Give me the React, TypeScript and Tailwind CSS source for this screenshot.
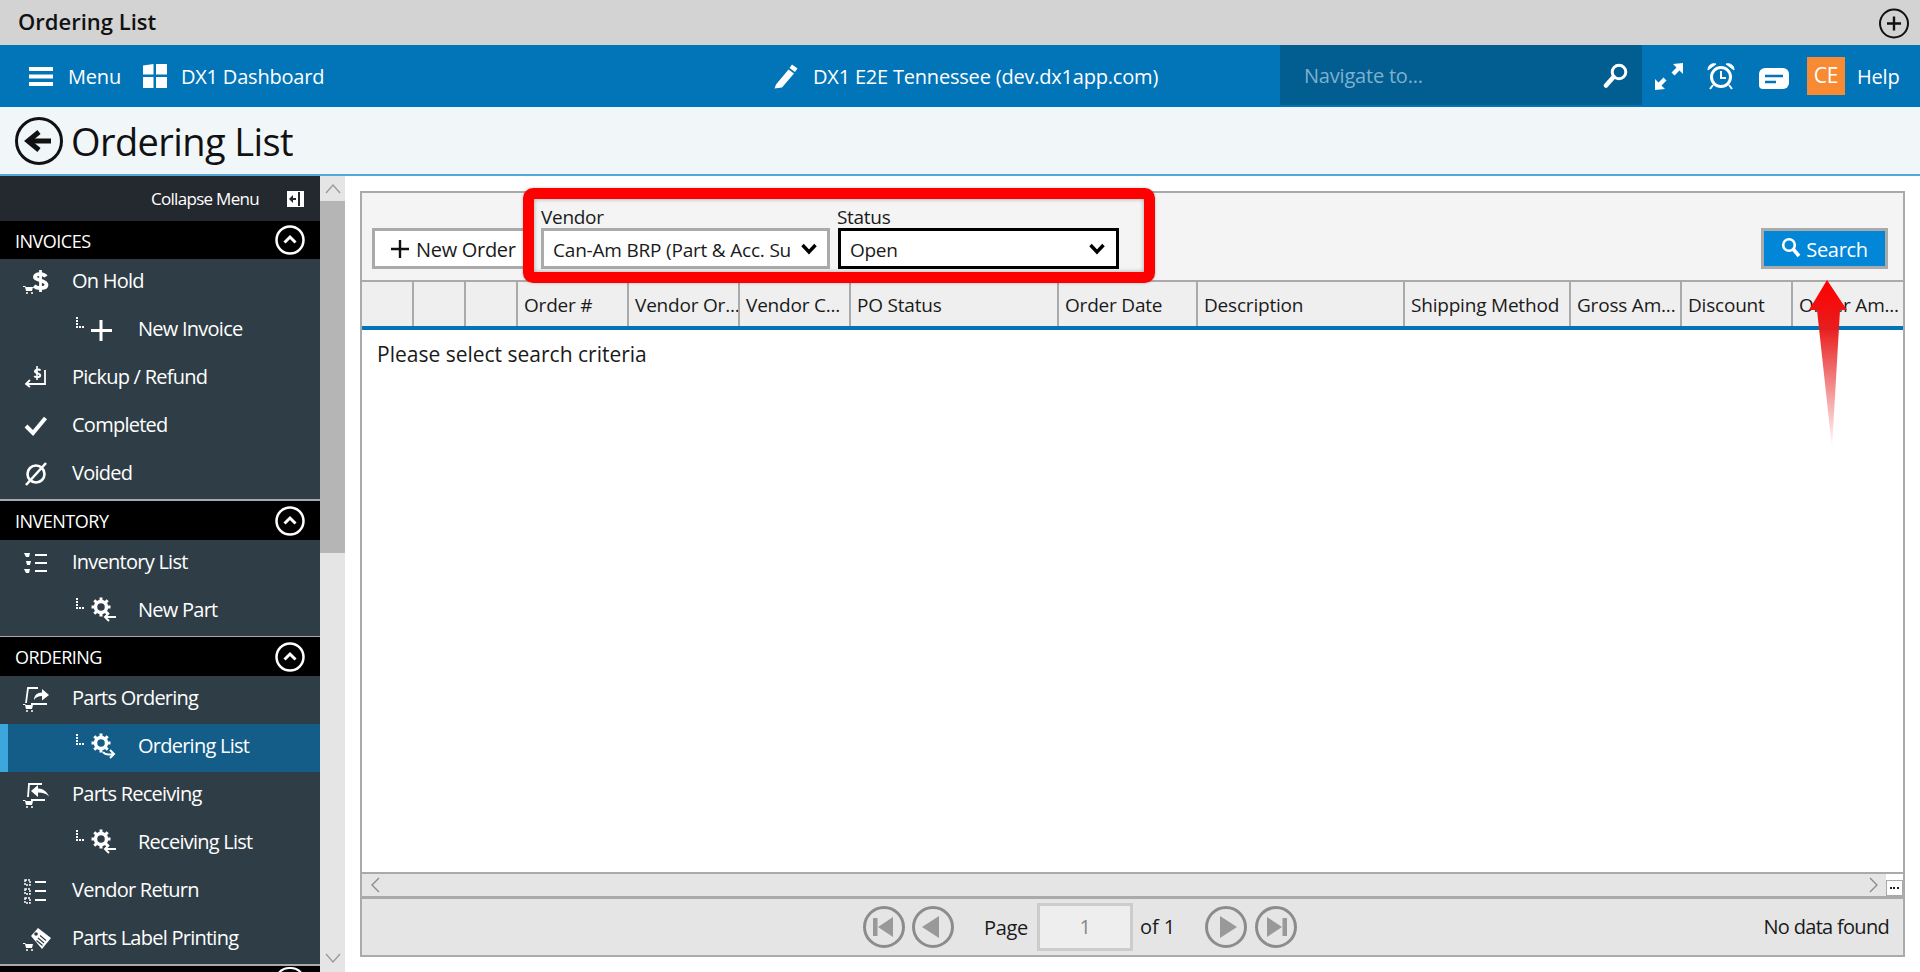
import type { ReactNode } from "react";

const cart = (x: number, y: number) => (
  <g fill="currentColor" stroke="none">
    <path d={`M${x} ${y}h2l1 1h7l-1 4h-6l-1-4h-2z`} />
    <circle cx={x + 4} cy={y + 7} r="1" />
    <circle cx={x + 9} cy={y + 7} r="1" />
  </g>
);

function Ico({ children, w = 28, h = 28 }: { children: ReactNode; w?: number; h?: number }) {
  return (
    <svg width={w} height={h} viewBox={`0 0 ${w} ${h}`} fill="none" stroke="currentColor" className="-mt-[2px] shrink-0 text-white">
      {children}
    </svg>
  );
}

const OnHoldIcon = (
  <Ico>
    <path d="M23 8.500C21 5.500 13 5 12 8.500c-1 4 12 3.500 11.500 8.500-.4 3.800-9 4-12.500 1" strokeWidth="3.800" />
    <path d="M17.500 2v22" strokeWidth="2.800" />
    {cart(0, 18)}
  </Ico>
);
const PickupIcon = (
  <Ico>
    <path d="M17.500 6.500c-1-1.300-5-1.400-5.500.6-.5 2.300 5.600 1.900 5.200 4.500-.3 2-4.600 1.900-6 .5" strokeWidth="2" />
    <path d="M14 2v14" strokeWidth="1.600" />
    <path d="M22 6v14H3M7 16l-4 4 4 3" strokeWidth="1.800" />
  </Ico>
);
const CheckIcon = (
  <Ico>
    <path d="M3 14l7 7L22.500 6" strokeWidth="4" />
  </Ico>
);
const VoidIcon = (
  <Ico>
    <circle cx="13" cy="14" r="8.500" strokeWidth="2.600" />
    <path d="M3 25L23 3" strokeWidth="2.600" />
  </Ico>
);
const ListIcon = (
  <Ico>
    <path d="M12 6h12M12 14h12M12 22h12" strokeWidth="2" />
    <path d="M1 4h6l-1 4H3zM3 12h5l-1 4H4zM1 20h6l-1 4H3z" fill="currentColor" stroke="none" />
  </Ico>
);
const ReturnListIcon = (
  <Ico>
    <path d="M12 5h11M12 14h11M12 23h11" strokeWidth="2" />
    <path d="M2 3h5v5H2zM2 12h5v5H2zM2 21h5v5H2z" strokeWidth="1.500" strokeDasharray="2 1" />
  </Ico>
);
const OrderIcon = (
  <Ico>
    <path d="M15 3H5L3 18M8 19h16" strokeWidth="1.800" />
    <path d="M26 10l-7-6v3.500c-5 0-8 3-8 7.500 2-3 4.500-4 8-4v4.500z" fill="currentColor" stroke="none" />
    {cart(0, 19)}
  </Ico>
);
const ReceiveIcon = (
  <Ico>
    <path d="M5 16L6 3h13M8 19h14" strokeWidth="1.800" />
    <path d="M8 10l7-6v3.500c5 0 9 3 11 8-3-3-6-4-11-4V16z" fill="currentColor" stroke="none" />
    {cart(0, 19)}
  </Ico>
);
const LabelIcon = (
  <Ico>
    <path d="M8 11l7-8 13 10-9 11z" fill="currentColor" stroke="none" />
    <circle cx="13" cy="9" r="1.800" fill="#2f3e46" stroke="none" />
    <path d="M15 13l6 5M13.500 15.500l6 5M17 10.500l6 5" stroke="#2f3e46" strokeWidth="1.200" />
    {cart(0, 18)}
  </Ico>
);

function Tree() {
  return (
    <svg width="14" height="14" viewBox="0 0 14 14" fill="none" stroke="currentColor" className="-mt-[16px] shrink-0 text-white">
      <path d="M2 1v10h8" strokeWidth="2" strokeDasharray="2 1" />
    </svg>
  );
}

function Gear({ variant }: { variant: "back" | "loop" }) {
  return (
    <svg width="28" height="28" viewBox="0 0 28 28" fill="none" stroke="currentColor" className="-mt-[4px] shrink-0 text-white">
      <circle cx="11" cy="11" r="5.500" strokeWidth="3.500" />
      <path d="M11 1.500v3M11 17.500v3M1.500 11h3M17.500 11h3M4.300 4.300l2.200 2.200M15.500 15.500l2.200 2.200M17.700 4.300l-2.200 2.200M6.500 15.500l-2.200 2.200" strokeWidth="3" />
      {variant === "back" ? (
        <path d="M26 21H15M19 17l-4 4 4 4" strokeWidth="2" />
      ) : (
        <path d="M13 20c2 3 6 3 10 2M20 18l4 4-4 4" strokeWidth="2" />
      )}
    </svg>
  );
}

function PlusBold() {
  return (
    <svg width="24" height="24" viewBox="0 0 24 24" stroke="currentColor" className="-ml-[1px] -mt-[2px] shrink-0 text-white">
      <path d="M12 2v21M2 12.500h21" strokeWidth="3" />
    </svg>
  );
}

function Row({ icon, label }: { icon: ReactNode; label: string }) {
  return (
    <div className="flex h-12 shrink-0 items-center pl-[23px]">
      <div className="flex w-[49px] items-center">{icon}</div>
      <span className="-mt-[4px]">{label}</span>
    </div>
  );
}

function SubRow({ icon, label, active }: { icon: ReactNode; label: string; active?: boolean }) {
  return (
    <div className={active ? "flex h-12 shrink-0 items-center border-l-8 border-[#3ba7dc] bg-[#135d88] pl-[67px]" : "flex h-12 shrink-0 items-center pl-[75px]"}>
      <Tree />
      <div className="ml-[1px] flex w-[48px] items-center">{icon}</div>
      <span className="-mt-[4px]">{label}</span>
    </div>
  );
}

function Section({ title, first }: { title: string; first?: boolean }) {
  return (
    <div className={first ? "flex h-[38px] shrink-0 items-center justify-between bg-black pl-[15px] pr-[15px] text-[18px] tracking-[-0.5px]" : "flex h-[39px] shrink-0 items-center justify-between bg-black pl-[15px] pr-[15px] text-[18px] tracking-[-0.5px]"}>
      <span className="mt-[2px]">{title}</span>
      <svg width="30" height="30" viewBox="0 0 30 30" fill="none" stroke="white" className="shrink-0">
        <circle cx="15" cy="15" r="13.500" strokeWidth="2.500" />
        <path d="M9.500 17.500L15 12l5.500 5.500" strokeWidth="3" />
      </svg>
    </div>
  );
}

function Sidebar() {
  return (
    <aside className="flex w-[320px] shrink-0 flex-col overflow-hidden bg-[#2f3e46] text-[20px] tracking-[-0.75px] text-white">
      <div className="flex h-[45px] shrink-0 items-center justify-end bg-[#24292f] pr-[16px] text-[17px] tracking-[-0.7px]">
        <span className="mr-[28px]">Collapse Menu</span>
        <svg width="17" height="16" viewBox="0 0 17 16" className="shrink-0">
          <rect width="17" height="16" fill="white" />
          <rect x="11" y="1" width="2" height="14" fill="#24292f" />
          <path d="M2 8l4-4v3h3v2H6v3z" fill="#24292f" />
        </svg>
      </div>
      <Section title="INVOICES" first />
      <Row icon={OnHoldIcon} label="On Hold" />
      <SubRow icon={<PlusBold />} label="New Invoice" />
      <Row icon={PickupIcon} label="Pickup / Refund" />
      <Row icon={CheckIcon} label="Completed" />
      <Row icon={VoidIcon} label="Voided" />
      <div className="h-[2px] shrink-0 bg-[#a9a9a9]" />
      <Section title="INVENTORY" />
      <Row icon={ListIcon} label="Inventory List" />
      <SubRow icon={<Gear variant="back" />} label="New Part" />
      <div className="h-[1px] shrink-0 bg-[#a9a9a9]" />
      <Section title="ORDERING" />
      <Row icon={OrderIcon} label="Parts Ordering" />
      <SubRow icon={<Gear variant="loop" />} label="Ordering List" active />
      <Row icon={ReceiveIcon} label="Parts Receiving" />
      <SubRow icon={<Gear variant="back" />} label="Receiving List" />
      <Row icon={ReturnListIcon} label="Vendor Return" />
      <Row icon={LabelIcon} label="Parts Label Printing" />
      <div className="h-[2px] shrink-0 bg-[#a9a9a9]" />
      <div className="flex flex-1 justify-end bg-black pr-[15px] pt-[1px]">
        <div className="h-[14px] w-[30px] rounded-t-full border-[2.5px] border-b-0 border-white" />
      </div>
    </aside>
  );
}

function ScrollRail() {
  return (
    <div className="flex w-[25px] shrink-0 flex-col bg-[#e5e5e5]">
      <div className="flex h-[25px] shrink-0 items-center justify-center">
        <svg width="16" height="10" viewBox="0 0 16 10" fill="none" stroke="#9a9a9a" strokeWidth="1.300">
          <path d="M1 9l7-8 7 8" />
        </svg>
      </div>
      <div className="h-[352px] shrink-0 bg-[#b5b5b5]" />
      <div className="flex flex-1 items-end justify-center pb-[9px]">
        <svg width="16" height="10" viewBox="0 0 16 10" fill="none" stroke="#9a9a9a" strokeWidth="1.300">
          <path d="M1 1l7 8 7-8" />
        </svg>
      </div>
    </div>
  );
}

const columns = ["", "", "", "Order #", "Vendor Or...", "Vendor C...", "PO Status", "Order Date", "Description", "Shipping Method", "Gross Am...", "Discount", "Order Am..."];

function Chevron() {
  return (
    <svg width="16" height="12" viewBox="0 0 16 12" fill="none" stroke="black" strokeWidth="3.400" className="shrink-0">
      <path d="M1.500 2l6.500 7 6.500-7" />
    </svg>
  );
}

function PagerButton({ children }: { children: ReactNode }) {
  return (
    <svg width="42" height="42" viewBox="0 0 42 42" fill="none" className="shrink-0">
      <circle cx="21" cy="21" r="19.500" stroke="#8c8c8c" strokeWidth="3" />
      <g fill="#999999">{children}</g>
    </svg>
  );
}

function Panel() {
  return (
    <div className="flex h-full flex-col border-2 border-[#aaaaaa]">
      <div className="flex h-[89px] shrink-0 items-end border-b-2 border-[#aaaaaa] bg-[#f4f4f4] pb-[11px] pl-[10px] pr-[15px]">
        <button className="flex h-[41px] w-[156px] shrink-0 items-center border-[3px] border-[#aaaaaa] bg-white pl-[15px] text-[20px] tracking-[-0.3px] text-[#1a1a1a]">
          <svg width="20" height="20" viewBox="0 0 20 20" stroke="#111" className="mr-[7px] shrink-0">
            <path d="M10 1v18M1 10h18" strokeWidth="2.400" />
          </svg>
          <span className="-ml-[1px] mt-[2px]">New Order</span>
        </button>
        <div className="ml-[13px] flex w-[289px] shrink-0 flex-col">
          <span className="text-[19px] leading-[22px] tracking-[-0.3px] text-[#1a1a1a]">Vendor</span>
          <div className="flex h-[41px] items-center border-[3px] border-[#aaaaaa] bg-white pl-[9px] text-[19px] tracking-[-0.2px] text-[#1a1a1a]">
            <span className="mt-[4px] w-[239px] overflow-hidden whitespace-nowrap">Can-Am BRP (Part &amp; Acc. Supplier)</span>
            <span className="ml-[9px] flex"><Chevron /></span>
          </div>
        </div>
        <div className="ml-[8px] flex w-[281px] shrink-0 flex-col">
          <span className="-ml-[1px] text-[19px] leading-[22px] tracking-[-0.3px] text-[#1a1a1a]">Status</span>
          <div className="flex h-[41px] items-center justify-between border-[3px] border-black bg-white pl-[9px] pr-[11px] text-[19px] tracking-[-0.3px] text-[#1a1a1a]">
            <span className="mt-[4px]">Open</span>
            <span className="flex"><Chevron /></span>
          </div>
        </div>
        <button className="ml-auto flex h-[41px] w-[127px] shrink-0 items-center justify-center gap-[5px] border-[3px] border-[#aaaaaa] bg-[#0286d8] text-[20px] tracking-[-0.3px] text-white">
          <svg width="20" height="22" viewBox="0 0 20 22" fill="none" stroke="white" className="-mt-[2px] shrink-0">
            <circle cx="8" cy="8" r="5.800" strokeWidth="2.600" />
            <path d="M12.500 12.500L18 19" strokeWidth="3.600" />
          </svg>
          <span className="mt-[2px]">Search</span>
        </button>
      </div>
      <div className="grid h-[48px] shrink-0 grid-cols-[52px_52px_52px_111px_111px_111px_208px_139px_207px_166px_111px_111px_111px] border-b-[4px] border-[#0274b8] bg-[#efefef] text-[19px] tracking-[-0.2px] text-[#1a1a1a]">
        {columns.map((c, i) => (
          <div key={i} className={i === columns.length - 1 ? "flex items-center overflow-hidden whitespace-nowrap pl-[6px] pt-[2px]" : "flex items-center overflow-hidden whitespace-nowrap border-r-2 border-[#aaaaaa] pl-[6px] pt-[2px]"}>
            {c}
          </div>
        ))}
      </div>
      <div className="min-h-0 flex-1 bg-white pl-[15px] pt-[10px] text-[21px] leading-[28px] text-[#1a1a1a]">
        Please select search criteria
      </div>
      <div className="flex h-[24px] shrink-0 items-center border-t-2 border-[#aaaaaa] bg-[#e5e5e5]">
        <svg width="10" height="16" viewBox="0 0 10 16" fill="none" stroke="#8a8a8a" strokeWidth="1.300" className="ml-[8px] shrink-0">
          <path d="M9 1L2 8l7 7" />
        </svg>
        <svg width="10" height="16" viewBox="0 0 10 16" fill="none" stroke="#8a8a8a" strokeWidth="1.300" className="ml-auto mr-[7px] shrink-0">
          <path d="M1 1l7 7-7 7" />
        </svg>
        <div className="flex h-full w-[17px] shrink-0 items-end bg-white">
          <div className="flex h-[16px] w-full items-center justify-center border border-[#aaaaaa]">
            <div className="h-[2px] w-[9px] border-t-2 border-dotted border-[#222222]" />
          </div>
        </div>
      </div>
      <div className="h-[3px] shrink-0 bg-[#aaaaaa]" />
      <div className="flex h-[56px] shrink-0 items-center bg-[#e5e5e5] pr-[14px] text-[20px] tracking-[-0.3px] text-[#1a1a1a]">
        <div className="ml-[501px] flex items-center">
          <PagerButton>
            <path d="M10 12h4.500v18H10zM15 21l15-10v20z" />
          </PagerButton>
          <div className="ml-[7px]">
            <PagerButton>
              <path d="M10 21l17-11v22z" />
            </PagerButton>
          </div>
          <span className="ml-[30px] mt-[2px]">Page</span>
          <div className="ml-[9px] flex h-[48px] w-[96px] items-center justify-center border-[3px] border-[#cccccc] bg-[#eeeeee] text-[#888888]">1</div>
          <span className="ml-[7px] tracking-[-0.1px]">of 1</span>
          <div className="ml-[30px]">
            <PagerButton>
              <path d="M15 10l17 11-17 11z" />
            </PagerButton>
          </div>
          <div className="ml-[8px]">
            <PagerButton>
              <path d="M12 11l15 10-15 10zM27.500 12H32v18h-4.500z" />
            </PagerButton>
          </div>
        </div>
        <span className="ml-auto tracking-[-0.7px]">No data found</span>
      </div>
    </div>
  );
}

export default function App() {
  return (
    <div className="relative flex h-[972px] w-[1920px] flex-col overflow-hidden bg-white font-['Open_Sans',sans-serif]">
      <div className="flex h-[45px] shrink-0 items-center justify-between bg-[#d3d3d3] pl-[18px] pr-[11px]">
        <span className="-mt-[2px] text-[22px] font-semibold text-[#111111]">Ordering List</span>
        <svg width="30" height="31" viewBox="0 0 30 31" fill="none" stroke="#111" className="mt-[1px] shrink-0">
          <circle cx="15" cy="15.500" r="14" strokeWidth="2" />
          <path d="M15 8.500v14M8 15.500h14" strokeWidth="2.400" />
        </svg>
      </div>

      <header className="flex h-[62px] shrink-0 items-stretch bg-[#0274b8] text-[20px] tracking-[-0.2px] text-white">
        <div className="flex w-[775px] shrink-0 items-center pl-[29px]">
          <svg width="24" height="19" viewBox="0 0 24 19" fill="white" className="shrink-0">
            <path d="M0 0h24v4H0zM0 7.500h24v4H0zM0 15h24v4H0z" />
          </svg>
          <span className="ml-[15px] mt-[2px]">Menu</span>
          <svg width="24" height="24" viewBox="0 0 24 24" fill="white" className="ml-[22px] shrink-0">
            <path d="M0 1.500L10.500 0v10.500H0zM13 0h11v10.500H13zM0 13h10.500v11H0zM13 13h11v11H13z" />
          </svg>
          <span className="ml-[14px] mt-[2px]">DX1 Dashboard</span>
        </div>
        <div className="-ml-[2px] flex w-[507px] shrink-0 items-center">
          <svg width="25" height="25" viewBox="0 0 25 25" fill="white" className="shrink-0">
            <path d="M19 .5l5.500 4L22 8l-5.500-4zM15.500 5.500l5.500 4L9 23.500 1.500 24.500 3 20.500z" />
          </svg>
          <span className="ml-[15px] mt-[2px] whitespace-nowrap">DX1 E2E Tennessee (dev.dx1app.com)</span>
        </div>
        <div className="mb-[2px] flex w-[362px] shrink-0 items-center justify-between bg-[#025e91] pl-[24px] pr-[13px]">
          <span className="mt-[2px] text-[#7fb0cf]">Navigate to...</span>
          <svg width="26" height="25" viewBox="0 0 26 25" fill="none" stroke="white" className="shrink-0">
            <circle cx="16" cy="9" r="6.800" strokeWidth="3" />
            <path d="M10.500 14L3 22.500" strokeWidth="4.500" strokeLinecap="round" />
          </svg>
        </div>
        <div className="flex flex-1 items-center pl-[13px]">
          <svg width="28" height="27" viewBox="0 0 28 27" fill="white" className="shrink-0">
            <path d="M28 0v11l-3.500-3.500-5 5-3-3 5-5L18 1zM0 27V16l3.500 3.500 5-5 3 3-5 5L10 26z" />
          </svg>
          <svg width="28" height="28" viewBox="0 0 28 28" fill="none" stroke="white" className="ml-[24px] shrink-0">
            <circle cx="14" cy="15" r="9.500" strokeWidth="3" />
            <path d="M14 9v7h5" strokeWidth="2" />
            <path d="M1 8c0-5 4-7 8-6zM27 8c0-5-4-7-8-6z" fill="white" strokeWidth="1" />
            <path d="M6 23l-3 4M22 23l3 4" strokeWidth="2" />
          </svg>
          <svg width="30" height="21" viewBox="0 0 30 21" className="ml-[24px] mt-[4px] shrink-0">
            <path d="M6 0h18a6 6 0 0 1 6 6v9a6 6 0 0 1-6 6H4a4 4 0 0 1-4-4V6a6 6 0 0 1 6-6z" fill="white" />
            <path d="M6 8h18M6 14h11" stroke="#0274b8" strokeWidth="2.500" />
          </svg>
          <div className="ml-[18px] flex h-[38px] w-[38px] shrink-0 items-center justify-center bg-[#f78a32] text-[21px]">CE</div>
          <span className="ml-[12px] mt-[2px]">Help</span>
        </div>
      </header>

      <div className="flex h-[69px] shrink-0 items-center border-b-2 border-[#55a8dc] bg-[#f1f6f9] pl-[15px]">
        <svg width="48" height="48" viewBox="0 0 48 48" fill="none" stroke="#111" className="shrink-0">
          <circle cx="24" cy="24" r="22.500" strokeWidth="3" />
          <path d="M36 24H15" strokeWidth="5" />
          <path d="M24 15L13 24l11 9" strokeWidth="5" />
        </svg>
        <span className="ml-[8px] mt-[2px] text-[38px] tracking-[-0.6px] text-[#111111]">Ordering List</span>
      </div>

      <div className="flex min-h-0 flex-1">
        <Sidebar />
        <ScrollRail />
        <main className="min-w-0 flex-1 p-[15px]">
          <Panel />
        </main>
      </div>

      {/* annotations painted on top of the screenshot */}
      <div className="absolute left-[523px] top-[188px] h-[95px] w-[632px] rounded-[10px] border-[11px] border-[#ff0000] shadow-[inset_0_0_4px_rgba(0,0,0,0.35),0_0_3px_rgba(0,0,0,0.25)]" />
      <svg width="50" height="172" viewBox="0 0 50 172" className="absolute left-[1804px] top-[278px]">
        <defs>
          <linearGradient id="arrowFade" x1="0" y1="0" x2="0" y2="1">
            <stop offset="0" stopColor="#ff0000" />
            <stop offset="0.28" stopColor="#e81c1c" />
            <stop offset="1" stopColor="#e81c1c" stopOpacity="0" />
          </linearGradient>
        </defs>
        <path d="M23 2L43 32H36L28 170 13 32H5z" fill="url(#arrowFade)" />
      </svg>
    </div>
  );
}
